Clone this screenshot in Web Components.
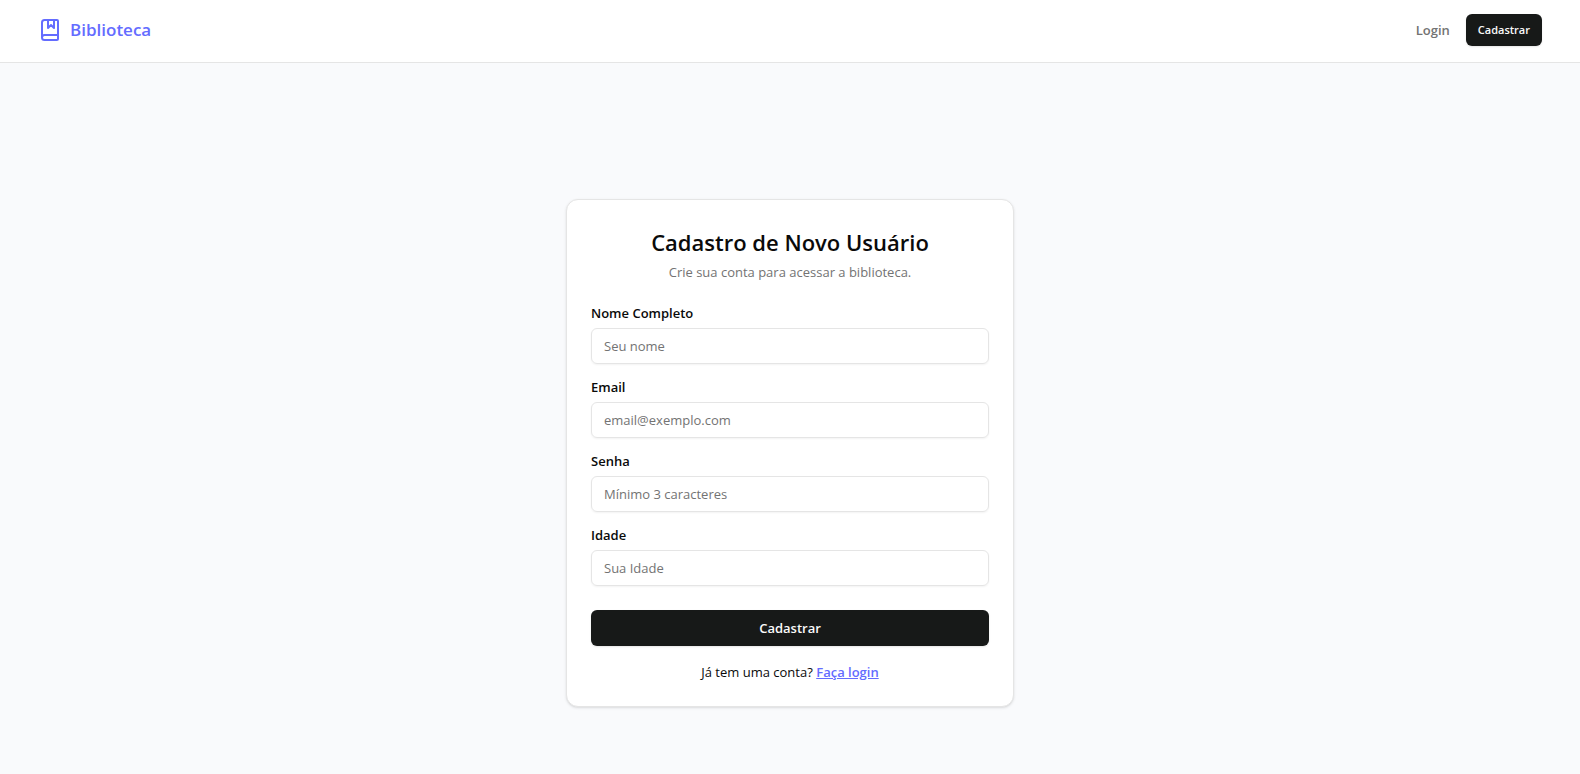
<!DOCTYPE html>
<html lang="pt-BR">
<head>
<meta charset="utf-8">
<meta name="viewport" content="width=device-width, initial-scale=1">
<title>Biblioteca</title>
<style>
  :root {
    --brand: #646cff;
    --ink: #0a0a0a;
    --muted: #737373;
    --line: #e5e5e5;
    --dark: #171918;
  }
  body {
    margin: 0;
    background: #f9fafc;
    color: var(--ink);
    font-family: "Segoe UI", "Open Sans", "Noto Sans", sans-serif;
    font-size: 13px;
    line-height: 20px;
  }
</style>
</head>
<body>
<library-app></library-app>
<script>
  function define(name, html, setup) {
    const template = document.createElement('template');
    template.innerHTML = html;
    customElements.define(name, class extends HTMLElement {
      connectedCallback() {
        if (this.shadowRoot) return;
        const root = this.attachShadow({ mode: 'open' });
        root.append(template.content.cloneNode(true));
        if (setup) setup(this, root);
      }
    });
  }

  define('app-button', `
    <style>
      :host { display: block; }
      button {
        box-sizing: border-box; width: 100%; height: 36px; padding: 0 16px; border: 0; border-radius: 6px;
        background: var(--dark); color: #fafafa; font: inherit; font-weight: 600; cursor: pointer;
        box-shadow: 0 1px 2px rgb(0 0 0 / .1);
      }
      :host([small]) button { height: 32px; padding: 0 12px; font-size: 11px; }
    </style>
    <button type="button"><slot></slot></button>`);

  define('app-brand', `
    <style>
      :host { display: block; }
      a { display: flex; align-items: center; gap: 8px; color: var(--brand); font-size: 17px; font-weight: 600; line-height: 28px; text-decoration: none; }
      svg { display: block; }
    </style>
    <a href="#">
      <svg width="24" height="24" viewBox="0 0 24 24" fill="none" stroke="currentColor" stroke-width="2" stroke-linecap="round" stroke-linejoin="round" aria-hidden="true">
        <path d="M10 2v8l3-3 3 3V2"/>
        <path d="M4 19.5v-15A2.5 2.5 0 0 1 6.5 2H19a1 1 0 0 1 1 1v18a1 1 0 0 1-1 1H6.5a1 1 0 0 1 0-5H20"/>
      </svg>
      <span><slot></slot></span>
    </a>`);

  define('app-header', `
    <style>
      :host { display: block; background: #fff; border-bottom: 1px solid var(--line); }
      header {
        box-sizing: border-box; max-width: 1536px; margin: 0 auto; padding: 14px 16px 16px;
        display: flex; align-items: center; justify-content: space-between;
      }
      nav { display: flex; align-items: center; gap: 16px; }
      nav a { color: var(--muted); font-weight: 600; text-decoration: none; }
    </style>
    <header>
      <app-brand>Biblioteca</app-brand>
      <nav><a href="#">Login</a><app-button small>Cadastrar</app-button></nav>
    </header>`);

  define('form-field', `
    <style>
      :host { display: grid; gap: 8px; }
      label { font-weight: 600; line-height: 14px; }
      input {
        box-sizing: border-box; width: 100%; height: 36px; padding: 4px 12px;
        border: 1px solid var(--line); border-radius: 6px; background: transparent;
        color: inherit; font: inherit; box-shadow: 0 1px 2px rgb(0 0 0 / .05); outline: none;
      }
      input::placeholder { color: var(--muted); opacity: 1; }
      input:focus { border-color: #a1a1a1; }
    </style>
    <label for="control"></label>
    <input id="control">`, (host, root) => {
      root.querySelector('label').textContent = host.getAttribute('label');
      const input = root.querySelector('input');
      input.type = host.getAttribute('type') || 'text';
      input.placeholder = host.getAttribute('placeholder');
    });

  define('app-card', `
    <style>
      :host {
        box-sizing: border-box; display: grid; gap: 24px; width: 100%; max-width: 448px; padding: 24px;
        border: 1px solid var(--line); border-radius: 12px; background: #fff;
        box-shadow: 0 1px 3px rgb(0 0 0 / .1), 0 1px 2px -1px rgb(0 0 0 / .1);
      }
      .head { display: grid; gap: 2px; text-align: center; }
    </style>
    <div class="head"><slot name="title"></slot><slot name="description"></slot></div>
    <slot></slot>`);

  define('signup-form', `
    <style>
      :host { display: flex; justify-content: center; }
      h1 { margin: 0; font-size: 22px; font-weight: 600; line-height: 36px; }
      p { margin: 0; text-align: center; }
      .description { color: var(--muted); }
      form { display: grid; gap: 24px; }
      .fields, .actions { display: grid; gap: 16px; }
      p a { color: var(--brand); font-weight: 600; text-decoration: underline; }
    </style>
    <app-card>
      <h1 slot="title">Cadastro de Novo Usuário</h1>
      <p slot="description" class="description">Crie sua conta para acessar a biblioteca.</p>
      <form>
        <div class="fields">
          <form-field label="Nome Completo" placeholder="Seu nome"></form-field>
          <form-field label="Email" type="email" placeholder="email@exemplo.com"></form-field>
          <form-field label="Senha" type="password" placeholder="Mínimo 3 caracteres"></form-field>
          <form-field label="Idade" type="number" placeholder="Sua Idade"></form-field>
        </div>
        <div class="actions">
          <app-button>Cadastrar</app-button>
          <p>Já tem uma conta? <a href="#">Faça login</a></p>
        </div>
      </form>
    </app-card>`);

  define('library-app', `
    <style>
      :host { display: block; }
      main { padding: 136px 16px 64px; }
    </style>
    <app-header></app-header>
    <main><signup-form></signup-form></main>`);
</script>
</body>
</html>
